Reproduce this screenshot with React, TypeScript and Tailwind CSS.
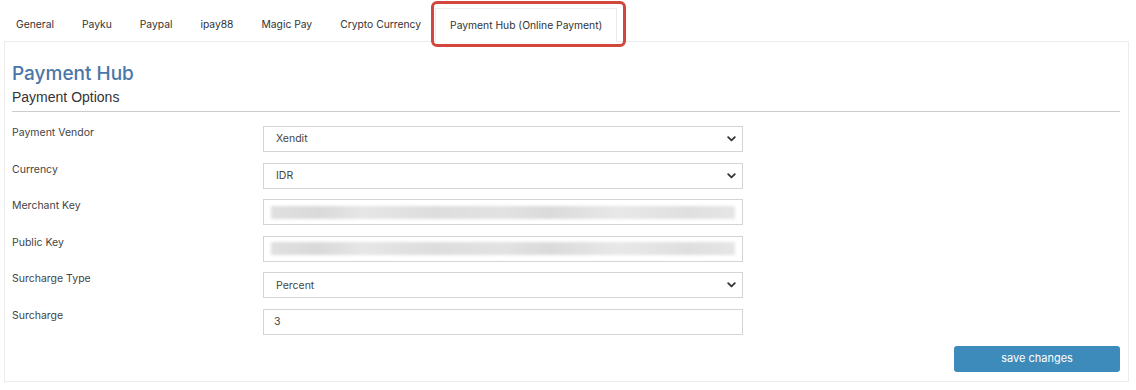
import React from 'react'

const tabs = ['General', 'Payku', 'Paypal', 'ipay88', 'Magic Pay', 'Crypto Currency']

const font = { fontFamily: 'Inter, "Open Sans", sans-serif' }

function Chevron() {
  return (
    <svg width="9" height="6" viewBox="0 0 9 6" className="shrink-0">
      <path d="M1.2 1.2 L4.5 4.4 L7.8 1.2" fill="none" stroke="#333" strokeWidth="1.8" strokeLinecap="round" strokeLinejoin="round" />
    </svg>
  )
}

function Row({ label, children }: { label: string; children: React.ReactNode }) {
  return (
    <div className="flex h-[36.6px]">
      <div className="w-[251px] leading-[14px] text-[10.5px] text-[#444]">{label}</div>
      {children}
    </div>
  )
}

function Select({ value }: { value: string }) {
  return (
    <div className="w-[480px] h-[26px] border border-[#d4d4d4] flex items-center justify-between pl-[12px] pr-[6px] text-[10.5px] text-[#444]">
      <span>{value}</span>
      <Chevron />
    </div>
  )
}

function Blurred() {
  return (
    <div className="w-[480px] h-[26px] border border-[#d4d4d4] flex items-center px-[7px]">
      <div className="w-full h-[13px] blur-[1.5px] bg-[linear-gradient(90deg,#e0e0e0_0%,#d9d9d9_10%,#e6e6e6_20%,#dddddd_35%,#e2e2e2_50%,#dadada_60%,#e8e8e8_75%,#dfdfdf_90%,#e6e6e6_100%)]" />
    </div>
  )
}

export default function App() {
  return (
    <div className="w-[1136px] h-[390px] bg-white relative" style={font}>
      {/* Tabs */}
      <div className="flex pl-[2px] pt-[8px] h-[41px] text-[10.3px] text-[#333]">
        {tabs.map(t => (
          <div key={t} className="px-[14px] h-[33px] flex items-center">{t}</div>
        ))}
        <div className="relative z-10 px-[14px] h-[34px] flex items-center bg-white border border-b-0 border-[#ececec]">
          Payment Hub (Online Payment)
        </div>
      </div>

      {/* Annotation box */}
      <div className="absolute left-[431px] top-[1px] w-[195px] h-[46px] border-[3px] border-[#d2463c] rounded-[6px]" />

      {/* Panel */}
      <div className="mx-[4px] w-[1125px] h-[341px] border border-[#ececec] pl-[7px] pr-[8px] flex flex-col">
        <div className="pt-[20px] text-[19px] font-medium leading-[24px] text-[#4a76a8]">Payment Hub</div>
        <div className="mt-[2px] text-[14px] leading-[18px] text-[#333]" style={{ fontFamily: '"Liberation Sans", Arial, sans-serif' }}>
          Payment Options
        </div>
        <div className="mt-[5px] h-px bg-[#cccccc]" />

        <div className="mt-[14px] flex flex-col">
          <Row label="Payment Vendor"><Select value="Xendit" /></Row>
          <Row label="Currency"><Select value="IDR" /></Row>
          <Row label="Merchant Key"><Blurred /></Row>
          <Row label="Public Key"><Blurred /></Row>
          <Row label="Surcharge Type"><Select value="Percent" /></Row>
          <Row label="Surcharge">
            <div className="w-[480px] h-[26px] border border-[#d4d4d4] flex items-center pl-[10px] text-[10.5px] text-[#444]">3</div>
          </Row>
        </div>

        <div className="flex justify-end mt-[0px]">
          <button className="w-[166px] h-[26px] rounded-[3px] bg-[#3d8bbb] text-white text-[11px]">save changes</button>
        </div>
      </div>
    </div>
  )
}
